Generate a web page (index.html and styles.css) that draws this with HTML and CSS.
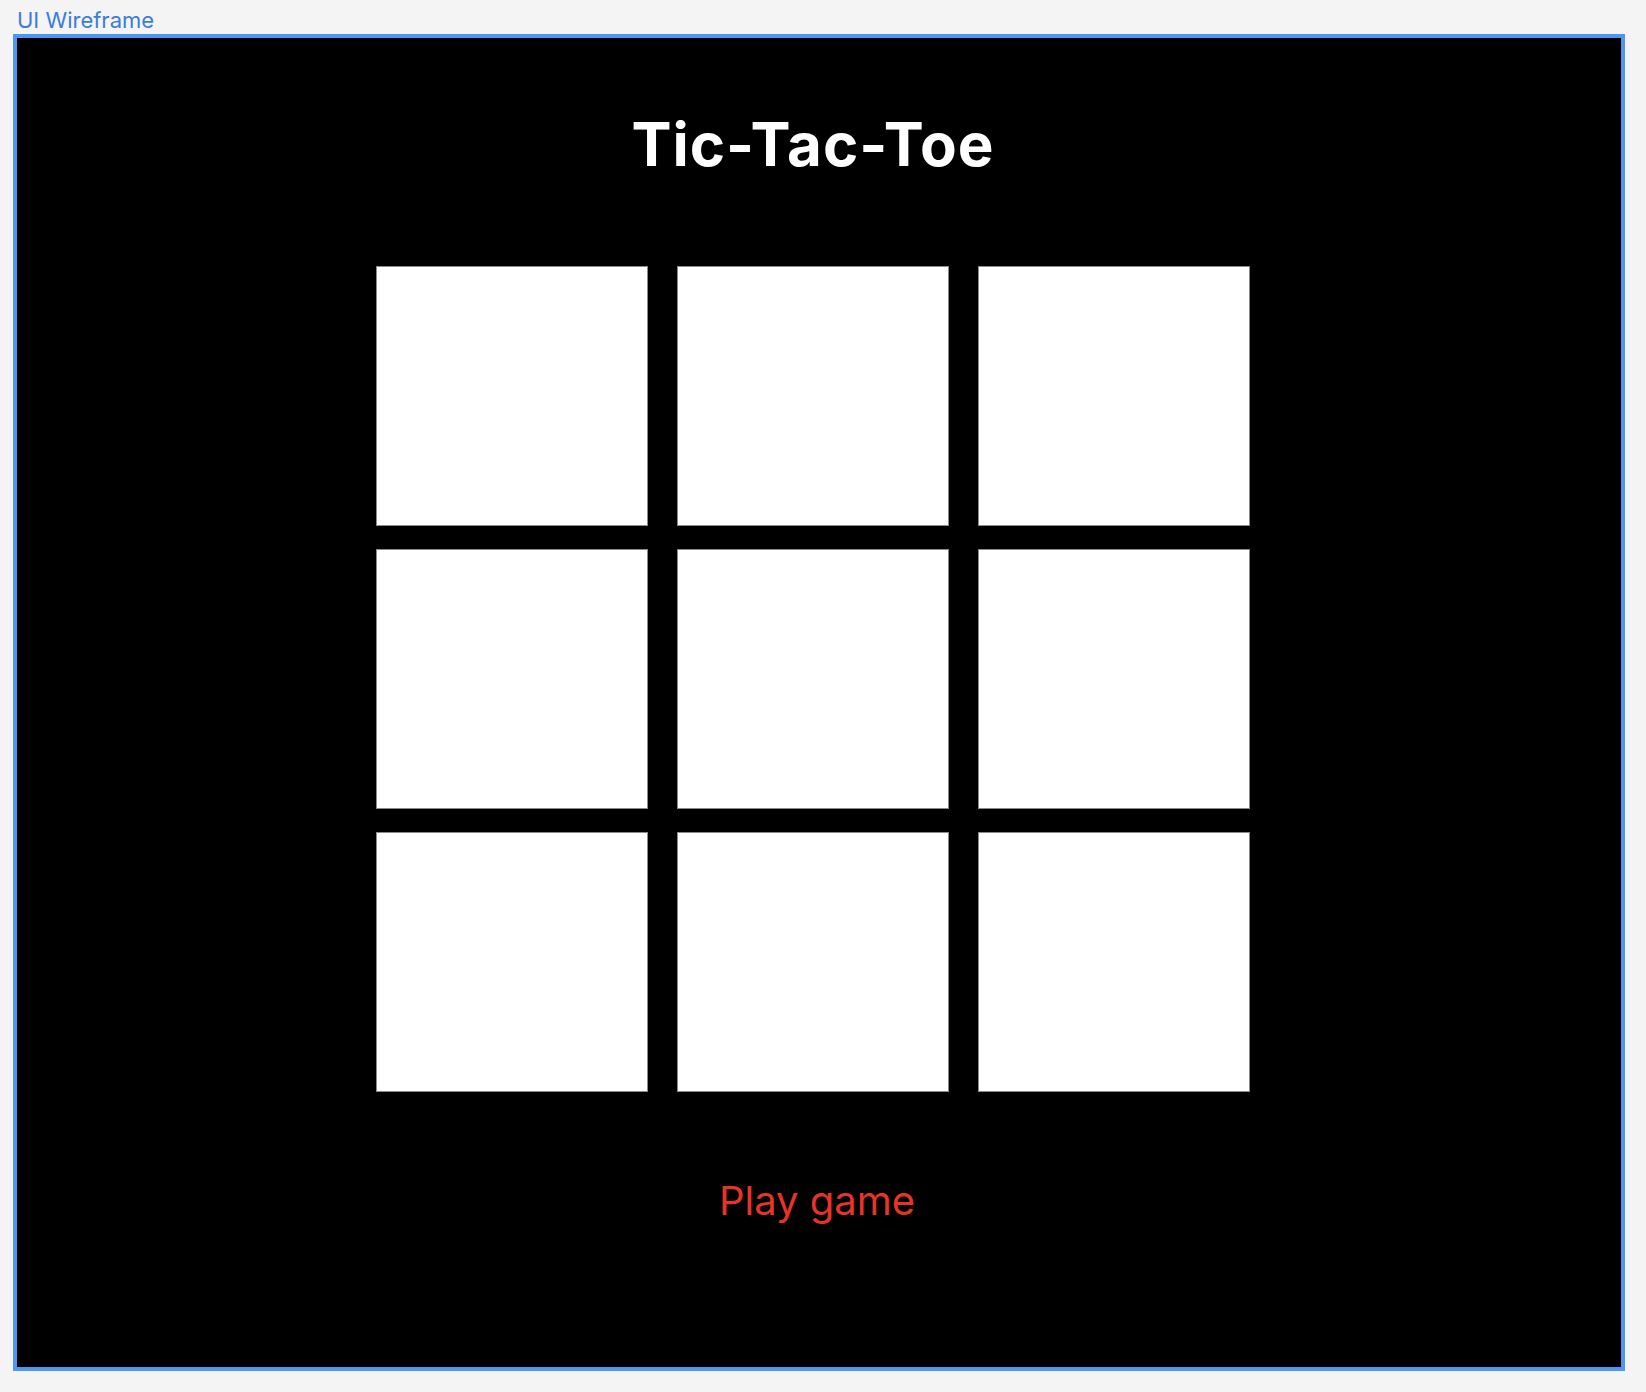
FILE: index.html
```html
<!DOCTYPE html>
<html lang="en">
<head>
<meta charset="utf-8">
<title>UI Wireframe</title>
<link rel="stylesheet" href="styles.css">
</head>
<body>
<div class="label">UI Wireframe</div>
<div class="frame">
  <div class="content">
    <h1 class="title">Tic-Tac-Toe</h1>
    <div class="board">
      <div class="cell"></div>
      <div class="cell"></div>
      <div class="cell"></div>
      <div class="cell"></div>
      <div class="cell"></div>
      <div class="cell"></div>
      <div class="cell"></div>
      <div class="cell"></div>
      <div class="cell"></div>
    </div>
    <div class="play">Play game</div>
  </div>
</div>
</body>
</html>
```
FILE: styles.css
```css
html, body {
  margin: 0;
  padding: 0;
  background: #f4f4f4;
  font-family: Inter, "Noto Sans", sans-serif;
}
.label {
  height: 34px;
  padding-left: 17px;
  padding-top: 7px;
  box-sizing: border-box;
  font-size: 22px;
  line-height: 26px;
  color: #3b7ddd;
}
.frame {
  margin-left: 13px;
  width: 1612px;
  height: 1337px;
  box-sizing: border-box;
  border: 4px solid #4d97f2;
  background: #000;
}
.content {
  display: flex;
  flex-direction: column;
  align-items: center;
  padding-right: 12px;
}
.title {
  margin: 70px 0 0;
  font-size: 60px;
  line-height: 72px;
  font-weight: 700;
  letter-spacing: 1px;
  color: #fff;
}
.board {
  margin-top: 86px;
  display: grid;
  grid-template-columns: repeat(3, 272px);
  grid-auto-rows: 260px;
  column-gap: 29px;
  row-gap: 23px;
}
.cell {
  background: #fff;
  border: 1px solid #8a8a8a;
  box-sizing: border-box;
}
.play {
  margin-top: 85px;
  margin-left: 8px;
  font-size: 40px;
  line-height: 48px;
  color: #e5342a;
}
```
